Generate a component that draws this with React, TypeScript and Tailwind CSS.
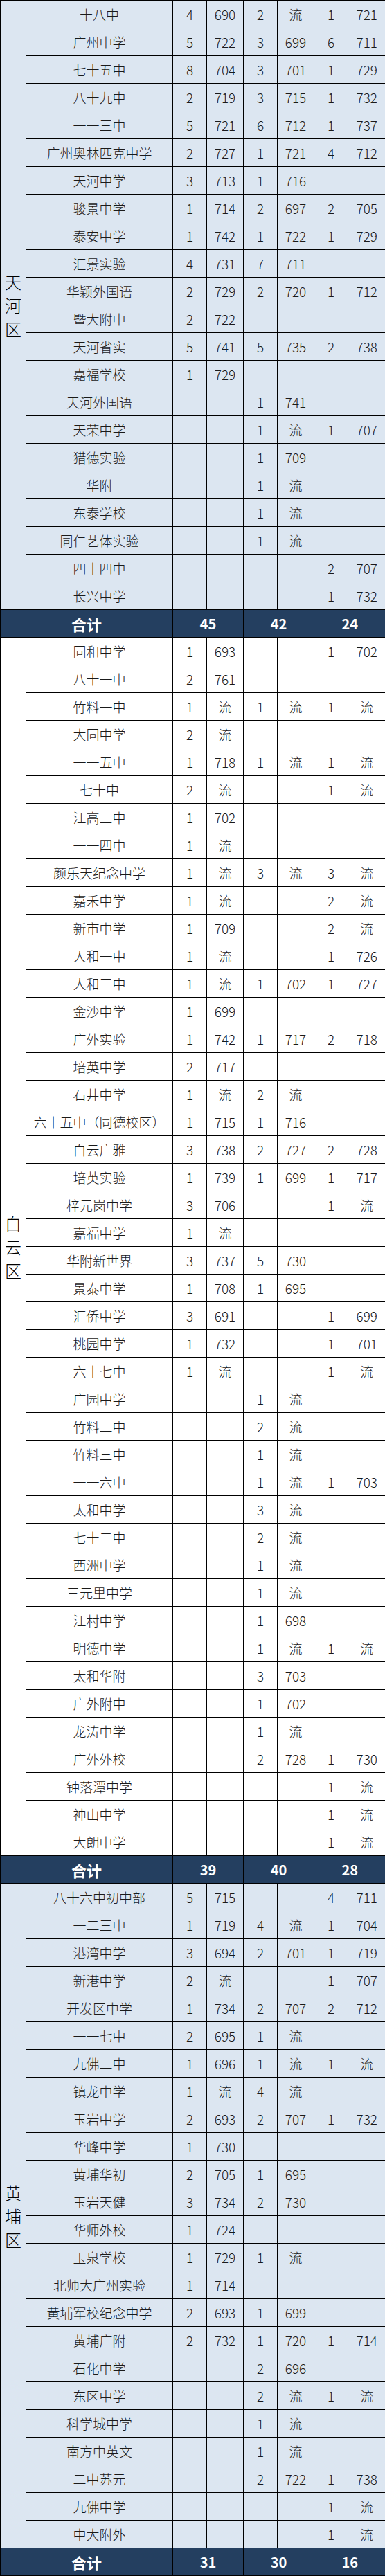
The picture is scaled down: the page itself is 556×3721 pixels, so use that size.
type Row = [string, string, string, string, string, string, string];

const tianhe: Row[] = [
  ['十八中', '4', '690', '2', '流', '1', '721'],
  ['广州中学', '5', '722', '3', '699', '6', '711'],
  ['七十五中', '8', '704', '3', '701', '1', '729'],
  ['八十九中', '2', '719', '3', '715', '1', '732'],
  ['一一三中', '5', '721', '6', '712', '1', '737'],
  ['广州奥林匹克中学', '2', '727', '1', '721', '4', '712'],
  ['天河中学', '3', '713', '1', '716', '', ''],
  ['骏景中学', '1', '714', '2', '697', '2', '705'],
  ['泰安中学', '1', '742', '1', '722', '1', '729'],
  ['汇景实验', '4', '731', '7', '711', '', ''],
  ['华颖外国语', '2', '729', '2', '720', '1', '712'],
  ['暨大附中', '2', '722', '', '', '', ''],
  ['天河省实', '5', '741', '5', '735', '2', '738'],
  ['嘉福学校', '1', '729', '', '', '', ''],
  ['天河外国语', '', '', '1', '741', '', ''],
  ['天荣中学', '', '', '1', '流', '1', '707'],
  ['猎德实验', '', '', '1', '709', '', ''],
  ['华附', '', '', '1', '流', '', ''],
  ['东泰学校', '', '', '1', '流', '', ''],
  ['同仁艺体实验', '', '', '1', '流', '', ''],
  ['四十四中', '', '', '', '', '2', '707'],
  ['长兴中学', '', '', '', '', '1', '732'],
];

const baiyun: Row[] = [
  ['同和中学', '1', '693', '', '', '1', '702'],
  ['八十一中', '2', '761', '', '', '', ''],
  ['竹料一中', '1', '流', '1', '流', '1', '流'],
  ['大同中学', '2', '流', '', '', '', ''],
  ['一一五中', '1', '718', '1', '流', '1', '流'],
  ['七十中', '2', '流', '', '', '1', '流'],
  ['江高三中', '1', '702', '', '', '', ''],
  ['一一四中', '1', '流', '', '', '', ''],
  ['颜乐天纪念中学', '1', '流', '3', '流', '3', '流'],
  ['嘉禾中学', '1', '流', '', '', '2', '流'],
  ['新市中学', '1', '709', '', '', '2', '流'],
  ['人和一中', '1', '流', '', '', '1', '726'],
  ['人和三中', '1', '流', '1', '702', '1', '727'],
  ['金沙中学', '1', '699', '', '', '', ''],
  ['广外实验', '1', '742', '1', '717', '2', '718'],
  ['培英中学', '2', '717', '', '', '', ''],
  ['石井中学', '1', '流', '2', '流', '', ''],
  ['六十五中（同德校区）', '1', '715', '1', '716', '', ''],
  ['白云广雅', '3', '738', '2', '727', '2', '728'],
  ['培英实验', '1', '739', '1', '699', '1', '717'],
  ['梓元岗中学', '3', '706', '', '', '1', '流'],
  ['嘉福中学', '1', '流', '', '', '', ''],
  ['华附新世界', '3', '737', '5', '730', '', ''],
  ['景泰中学', '1', '708', '1', '695', '', ''],
  ['汇侨中学', '3', '691', '', '', '1', '699'],
  ['桃园中学', '1', '732', '', '', '1', '701'],
  ['六十七中', '1', '流', '', '', '1', '流'],
  ['广园中学', '', '', '1', '流', '', ''],
  ['竹料二中', '', '', '2', '流', '', ''],
  ['竹料三中', '', '', '1', '流', '', ''],
  ['一一六中', '', '', '1', '流', '1', '703'],
  ['太和中学', '', '', '3', '流', '', ''],
  ['七十二中', '', '', '2', '流', '', ''],
  ['西洲中学', '', '', '1', '流', '', ''],
  ['三元里中学', '', '', '1', '流', '', ''],
  ['江村中学', '', '', '1', '698', '', ''],
  ['明德中学', '', '', '1', '流', '1', '流'],
  ['太和华附', '', '', '3', '703', '', ''],
  ['广外附中', '', '', '1', '702', '', ''],
  ['龙涛中学', '', '', '1', '流', '', ''],
  ['广外外校', '', '', '2', '728', '1', '730'],
  ['钟落潭中学', '', '', '', '', '1', '流'],
  ['神山中学', '', '', '', '', '1', '流'],
  ['大朗中学', '', '', '', '', '1', '流'],
];

const huangpu: Row[] = [
  ['八十六中初中部', '5', '715', '', '', '4', '711'],
  ['一二三中', '1', '719', '4', '流', '1', '704'],
  ['港湾中学', '3', '694', '2', '701', '1', '719'],
  ['新港中学', '2', '流', '', '', '1', '707'],
  ['开发区中学', '1', '734', '2', '707', '2', '712'],
  ['一一七中', '2', '695', '1', '流', '', ''],
  ['九佛二中', '1', '696', '1', '流', '1', '流'],
  ['镇龙中学', '1', '流', '4', '流', '', ''],
  ['玉岩中学', '2', '693', '2', '707', '1', '732'],
  ['华峰中学', '1', '730', '', '', '', ''],
  ['黄埔华初', '2', '705', '1', '695', '', ''],
  ['玉岩天健', '3', '734', '2', '730', '', ''],
  ['华师外校', '1', '724', '', '', '', ''],
  ['玉泉学校', '1', '729', '1', '流', '', ''],
  ['北师大广州实验', '1', '714', '', '', '', ''],
  ['黄埔军校纪念中学', '2', '693', '1', '699', '', ''],
  ['黄埔广附', '2', '732', '1', '720', '1', '714'],
  ['石化中学', '', '', '2', '696', '', ''],
  ['东区中学', '', '', '2', '流', '1', '流'],
  ['科学城中学', '', '', '1', '流', '', ''],
  ['南方中英文', '', '', '1', '流', '', ''],
  ['二中苏元', '', '', '2', '722', '1', '738'],
  ['九佛中学', '', '', '', '', '1', '流'],
  ['中大附外', '', '', '', '', '1', '流'],
];

const cell = 'border border-black h-[40px] p-0 text-center align-middle';

function District({
  name,
  rows,
  totals,
  shade,
}: {
  name: string;
  rows: Row[];
  totals: [string, string, string];
  shade: string;
}) {
  return (
    <>
      {rows.map((r, i) => (
        <tr key={r[0]} className={shade}>
          {i === 0 && (
            <td rowSpan={rows.length} className="border border-black p-0 text-center align-middle">
              <div className="flex flex-col items-center text-[24px] leading-[34px] text-black">
                {name.split('').map((ch) => (
                  <span key={ch}>{ch}</span>
                ))}
              </div>
            </td>
          )}
          <td className={`${cell} whitespace-nowrap`}>{r[0]}</td>
          <td className={cell}>{r[1]}</td>
          <td className={cell}>{r[2]}</td>
          <td className={cell}>{r[3]}</td>
          <td className={cell}>{r[4]}</td>
          <td className={cell}>{r[5]}</td>
          <td className={`${cell} border-r-0`}>{r[6]}</td>
        </tr>
      ))}
      <tr className="bg-[#243f60] text-white font-bold">
        <td colSpan={2} className={`${cell} text-[22px]`}>合计</td>
        <td colSpan={2} className={`${cell} text-[20px]`}>{totals[0]}</td>
        <td colSpan={2} className={`${cell} text-[20px]`}>{totals[1]}</td>
        <td colSpan={2} className={`${cell} border-r-0 text-[20px]`}>{totals[2]}</td>
      </tr>
    </>
  );
}

export default function App() {
  return (
    <div className="w-[556px] overflow-hidden bg-white font-['Noto_Sans_CJK_SC','Noto_Sans',sans-serif]">
      <table className="w-[556px] table-fixed border-collapse text-[19px] font-light leading-none text-[#1a1a1a]">
        <colgroup>
          <col className="w-[37px]" />
          <col className="w-[212px]" />
          <col className="w-[49px]" />
          <col className="w-[53px]" />
          <col className="w-[49px]" />
          <col className="w-[53px]" />
          <col className="w-[49px]" />
          <col className="w-[54px]" />
        </colgroup>
        <tbody>
          <District name="天河区" rows={tianhe} totals={['45', '42', '24']} shade="bg-[#dce6f1]" />
          <District name="白云区" rows={baiyun} totals={['39', '40', '28']} shade="bg-white" />
          <District name="黄埔区" rows={huangpu} totals={['31', '30', '16']} shade="bg-[#dce6f1]" />
        </tbody>
      </table>
    </div>
  );
}
